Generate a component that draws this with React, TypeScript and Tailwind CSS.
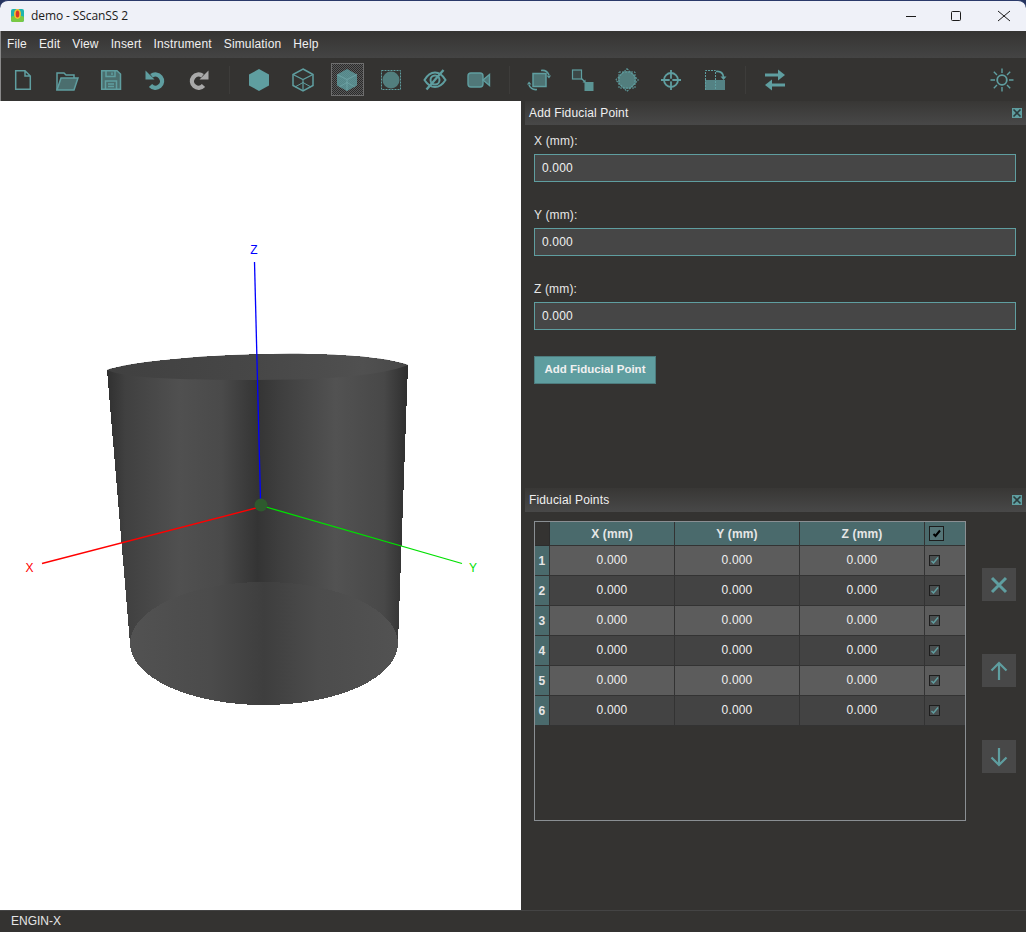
import React from "react";

const TEAL = "#5f9ea0";

const menus = ["File", "Edit", "View", "Insert", "Instrument", "Simulation", "Help"];
const rows = [1, 2, 3, 4, 5, 6];

const Svg: React.FC<{ children: React.ReactNode; size?: number }> = ({ children, size = 24 }) => (
  <svg width={size} height={size} viewBox="0 0 24 24" fill="none" stroke={TEAL} strokeWidth={1.5}>
    {children}
  </svg>
);

const hexPoints = "12,1 22,6.5 22,17.5 12,23 2,17.5 2,6.5";

const WireLines = () => (
  <>
    <path d="M2 6.5L12 11.5L22 6.5M12 11.5V23" strokeWidth={1.2} />
    <path d="M4 19L12 14.5L20 19" strokeWidth={1} />
  </>
);

const icons: React.ReactNode[][] = [
  [
    <path key="a" d="M4.7 2.7H14L19.3 8V21.3H4.7ZM14 2.7V8H19.3" />,
    <g key="b">
      <path d="M2 22V5H9L11 7H19V10" />
      <path d="M2 22L6 10H23L19 22Z" fill={TEAL} fillOpacity={0.55} />
    </g>,
    <g key="c">
      <path d="M2.7 2.7H18L21.5 6V21.3H2.7Z" fill={TEAL} fillOpacity={0.55} />
      <path d="M7 3V8.5H16V3M13 4.5V7M6.5 21V13H17.5V21M9 16H15M9 18.5H15" fill="none" />
    </g>,
    <g key="d">
      <path d="M8.5 7.800A6.600 6.600 0 1 1 7.500 17.500" strokeWidth={4.400} />
      <path d="M2.500 2.500V11.500H11.500Z" fill={TEAL} stroke="none" />
    </g>,
    <g key="e">
      <path d="M15.500 7.800A6.600 6.600 0 1 0 16.500 17.500" stroke="#a9a9a9" strokeWidth={4.400} />
      <path d="M21.500 2.500V11.500H12.500Z" fill="#a9a9a9" stroke="none" />
    </g>,
  ],
  [
    <polygon key="a" points={hexPoints} fill={TEAL} stroke="none" />,
    <g key="b">
      <polygon points={hexPoints} />
      <WireLines />
    </g>,
    <g key="c">
      <polygon points={hexPoints} fill={TEAL} fillOpacity={0.8} stroke="none" />
      <g stroke="#7fb5b7" strokeOpacity={0.45}>
        <WireLines />
      </g>
    </g>,
    <g key="d">
      <rect x="2.5" y="2.5" width="19" height="19" strokeWidth={1} strokeDasharray="2 1" />
      <circle cx="12" cy="12" r="8.5" fill={TEAL} fillOpacity={0.7} stroke="none" />
    </g>,
    <g key="e">
      <path d="M1.5 12C5 6 9 4.5 12 4.5S19 6 22.500 12C19 17.500 15 19 12 19S5 17.500 1.500 12Z" strokeWidth={2} />
      <circle cx="12" cy="12" r="4.500" strokeWidth={2} />
      <path d="M3.500 21.500L20.500 2" strokeWidth={2.400} />
    </g>,
    <g key="f">
      <rect x="1" y="5" width="15" height="14" rx="3" fill={TEAL} fillOpacity={0.65} strokeWidth={1.4} />
      <path d="M16 12L22.500 6.500V17.500Z" fill={TEAL} fillOpacity={0.65} strokeWidth={1.4} />
    </g>,
  ],
  [
    <g key="a">
      <rect x="6" y="5.500" width="13" height="13" fill={TEAL} fillOpacity={0.6} />
      <path d="M14 2.500C18 1.800 20.500 3.500 22 7" strokeWidth={1.6} />
      <path d="M19.500 7.500H24L22 10.500Z" fill={TEAL} stroke="none" />
      <path d="M10 21.500C6 22 3.500 20.500 2 17" strokeWidth={1.6} />
      <path d="M0 16.500H4.500L2 13.500Z" fill={TEAL} stroke="none" />
    </g>,
    <g key="b">
      <rect x="1.500" y="2" width="9" height="9" fill={TEAL} fillOpacity={0.2} strokeWidth={1.2} />
      <path d="M10.500 10.500L14 14" strokeWidth={1.2} />
      <path d="M14.500 14.500V11.500L11.500 14.500Z" fill={TEAL} stroke="none" />
      <rect x="13.500" y="14" width="9" height="9" fill={TEAL} fillOpacity={0.9} stroke="none" />
    </g>,
    <g key="c">
      <rect x="4" y="4" width="16" height="16" strokeWidth={1} strokeDasharray="2 1" />
      <rect x="4" y="4" width="16" height="16" strokeWidth={1} strokeDasharray="2 1" transform="rotate(45 12 12)" />
      <circle cx="12" cy="12" r="9" fill={TEAL} fillOpacity={0.7} stroke="none" />
    </g>,
    <g key="d">
      <circle cx="12" cy="12" r="7" strokeWidth={1.8} />
      <path d="M12 2V22M2 12H22" strokeWidth={1.800} />
      <circle cx="12" cy="12" r="1.500" fill="#343331" stroke="none" />
    </g>,
    <g key="e">
      <rect x="2" y="12" width="20" height="10" fill={TEAL} fillOpacity={0.75} stroke="none" />
      <path d="M2.500 12V2.500H12.500V22M2.500 22V12" strokeWidth={1} strokeDasharray="2 1" />
      <path d="M13 3.500C17 3 20 5 20.500 9" strokeWidth={1.6} />
      <path d="M17.500 8.500H23.500L20.500 12Z" fill={TEAL} stroke="none" />
    </g>,
  ],
  [
    <g key="a">
      <path d="M2 7H16" strokeWidth={3} />
      <path d="M15 1.500L22 7L15 12.500Z" fill={TEAL} stroke="none" />
      <path d="M22 17H8" strokeWidth={3} />
      <path d="M9 11.500L2 17L9 22.500Z" fill={TEAL} stroke="none" />
    </g>,
  ],
];

const ToolButton: React.FC<{ children: React.ReactNode; active?: boolean }> = ({ children, active }) => (
  <div className="flex h-[44px] w-[44px] items-center justify-center">
    {active ? (
      <div className="flex h-[33px] w-[33px] items-center justify-center border border-[#6e6e6e] bg-[repeating-conic-gradient(#5a5a5a_0_25%,#2a2a2a_0_50%)] bg-[length:2px_2px]">
        {children}
      </div>
    ) : (
      children
    )}
  </div>
);

const Toolbar = () => (
  <div className="flex h-[43px] items-center border-l border-[#8a8a8a] bg-[#343331] pr-[1px]">
    {icons.map((group, groupIndex) => (
      <React.Fragment key={groupIndex}>
        {group.map((icon, i) => (
          <ToolButton key={i} active={groupIndex === 1 && i === 2}>
            <Svg>{icon}</Svg>
          </ToolButton>
        ))}
        {groupIndex < icons.length - 1 && (
          <div className="mx-[7.5px] h-[28px] w-px bg-[#3d3c3a]" />
        )}
      </React.Fragment>
    ))}
    <div className="ml-auto flex h-[44px] w-[46px] items-center justify-center">
      <Svg>
        <circle cx="12" cy="12" r="4.800" strokeWidth={1.800} />
        <path d="M12 0.500V5M12 19V23.500M0.500 12H5M19 12H23.500M3.800 3.800L7 7M17 17L20.200 20.200M3.800 20.200L7 17M17 7L20.200 3.800" strokeWidth={1.400} />
      </Svg>
    </div>
  </div>
);

const DockHeader: React.FC<{ title: string }> = ({ title }) => (
  <div className="flex h-[24px] items-center justify-between bg-gradient-to-b from-[#383735] to-[#484848] pl-[4px] pr-[4px] text-[#f0f0f0]">
    <span>{title}</span>
    <svg width="10" height="10" viewBox="0 0 10 10">
      <rect width="10" height="10" fill={TEAL} />
      <path d="M1.500 1.500L8.500 8.500M8.500 1.500L1.500 8.500" stroke="#2c3c3d" strokeWidth={1.600} />
    </svg>
  </div>
);

const Field: React.FC<{ label: string }> = ({ label }) => (
  <div className="flex h-[74px] flex-col">
    <label className="flex h-[29px] items-center pt-[2px] text-[#e6e6e6]">{label}</label>
    <div className="flex h-[28px] items-center border border-[#5f9ea0] bg-[#464646] pl-[7px] text-[#f0f0f0]">0.000</div>
  </div>
);

const CheckMark: React.FC<{ color: string; width?: number }> = ({ color, width = 1.500 }) => (
  <svg width="9" height="9" viewBox="0 0 9 9" fill="none">
    <path d="M1.500 5L3.500 7L8 1.500" stroke={color} strokeWidth={width} />
  </svg>
);

const FiducialTable = () => (
  <div className="h-[300px] w-[432px] border border-[#8a8f93]">
    <div className="grid grid-cols-[15px_125px_125px_125px_40px]">
      <div className="h-[24px] border-r border-b border-[#2c2c2c] bg-[#343331]" />
      {["X (mm)", "Y (mm)", "Z (mm)"].map((h) => (
        <div key={h} className="flex h-[24px] items-center justify-center border-r border-b border-[#333] bg-[#4a6a6c] font-bold text-[#e6e6e6]">
          {h}
        </div>
      ))}
      <div className="flex h-[24px] items-center border-b border-[#333] bg-[#4a6a6c] pl-[4px]">
        <div className="flex h-[15px] w-[15px] items-center justify-center border border-[#1d1d1d] bg-[#557577]">
          <CheckMark color="#000" width={2} />
        </div>
      </div>
      {rows.map((row) => {
        const bg = row % 2 === 1 ? "bg-[#5c5c5c]" : "bg-[#434343]";
        return (
          <React.Fragment key={row}>
            <div className="flex h-[30px] items-center justify-center border-r border-b border-[#333] bg-[#4a6a6c] font-bold text-[#e6e6e6]">
              {row}
            </div>
            {[0, 1, 2].map((col) => (
              <div key={col} className={`flex h-[30px] items-center justify-center border-r border-b border-[#333] pb-[2px] text-[#f0f0f0] ${bg}`}>
                0.000
              </div>
            ))}
            <div className={`flex h-[30px] items-center border-b border-[#333] pl-[4px] ${bg}`}>
              <div className="flex h-[11px] w-[11px] items-center justify-center border border-[#1d1d1d] bg-[#4a4f50]">
                <CheckMark color={TEAL} />
              </div>
            </div>
          </React.Fragment>
        );
      })}
    </div>
  </div>
);

const SideButton: React.FC<{ d: string; strokeWidth?: number }> = ({ d, strokeWidth = 2.200 }) => (
  <div className="flex h-[33px] w-[34px] items-center justify-center bg-[#484848]">
    <svg width="20" height="20" viewBox="0 0 20 20" fill="none" stroke={TEAL} strokeWidth={strokeWidth}>
      <path d={d} />
    </svg>
  </div>
);

const Viewport = () => (
  <div className="w-[521px] bg-white">
    <svg width="521" height="809" viewBox="0 101 521 809" fontFamily="'Liberation Sans', sans-serif" fontSize="12">
      <defs>
        <linearGradient id="side" x1="107" x2="408" y1="0" y2="0" gradientUnits="userSpaceOnUse">
          <stop offset="0" stopColor="#303030" />
          <stop offset="0.06" stopColor="#404040" />
          <stop offset="0.24" stopColor="#505050" />
          <stop offset="0.38" stopColor="#4a4a4a" />
          <stop offset="0.5" stopColor="#343434" />
          <stop offset="0.58" stopColor="#3f3f3f" />
          <stop offset="0.76" stopColor="#525252" />
          <stop offset="0.92" stopColor="#484848" />
          <stop offset="1" stopColor="#2e2e2e" />
        </linearGradient>
        <linearGradient id="base" x1="130" x2="398" y1="0" y2="0" gradientUnits="userSpaceOnUse">
          <stop offset="0" stopColor="#525252" />
          <stop offset="0.3" stopColor="#4b4b4b" />
          <stop offset="0.5" stopColor="#3e3e3e" />
          <stop offset="0.7" stopColor="#4c4c4c" />
          <stop offset="1" stopColor="#525252" />
        </linearGradient>
        <linearGradient id="cap" x1="107" x2="408" y1="0" y2="0" gradientUnits="userSpaceOnUse">
          <stop offset="0" stopColor="#404040" />
          <stop offset="0.5" stopColor="#474747" />
          <stop offset="0.85" stopColor="#505050" />
          <stop offset="1" stopColor="#484848" />
        </linearGradient>
      </defs>
      <path d="M107 370C150 355 350 345 408 365L398 643.500A134 61.500 0 0 1 130 643.500Z" fill="url(#side)" shapeRendering="crispEdges" />
      <path d="M107 370C150 355 350 345 408 365C390 372 360 376 330 378C280 381 220 380 180 379C150 378 120 376 107 370Z" fill="url(#cap)" />
      <ellipse cx="264" cy="643.500" rx="134" ry="61.500" fill="url(#base)" shapeRendering="crispEdges" />
      <path d="M254.500 262L260.500 500" stroke="#0000ff" strokeWidth={1.300} />
      <path d="M42 563.500L256 508" stroke="#ff0000" strokeWidth={1.300} />
      <path d="M266 507L462 563.500" stroke="#00e000" strokeWidth={1.300} />
      <circle cx="261" cy="505" r="6.500" fill="#2e5a2e" />
      <text x="254" y="254" fill="#0000ff" textAnchor="middle">Z</text>
      <text x="29.500" y="572" fill="#ff0000" textAnchor="middle">X</text>
      <text x="473" y="572" fill="#00e000" textAnchor="middle">Y</text>
    </svg>
  </div>
);

export default function App() {
  return (
    <div className="flex h-[932px] w-[1026px] flex-col overflow-hidden bg-[#26345f] font-['Liberation_Sans',sans-serif] text-[12px] tracking-[0.15px]">
      {/* title bar */}
      <div className="flex h-[31px] items-center rounded-t-[8px] border-t border-[#2a3a6a] bg-[#eff1f8] pb-[1px] font-['Segoe_UI','Open_Sans',sans-serif] tracking-[-0.1px] text-[#1b1b1b]">
        <svg className="ml-[11px]" width="13" height="13" viewBox="0 0 13 13">
          <rect width="13" height="13" rx="2" fill="#1fb5b0" />
          <rect x="0" y="7" width="13" height="6" rx="2" fill="#7ac943" />
          <ellipse cx="6.500" cy="5" rx="3.500" ry="5" fill="#f2c230" />
          <ellipse cx="6.500" cy="5" rx="1.800" ry="3.500" fill="#d9342b" />
        </svg>
        <span className="ml-[7px]">demo - SScanSS 2</span>
        <div className="ml-auto flex items-center">
          <svg width="12" height="12" viewBox="0 0 12 12" stroke="#1b1b1b" fill="none" className="mr-[33px]"><path d="M1 6.500H11" /></svg>
          <svg width="12" height="12" viewBox="0 0 12 12" stroke="#1b1b1b" fill="none" className="mr-[35px]"><rect x="1.500" y="1.500" width="9" height="9" rx="1" /></svg>
          <svg width="14" height="14" viewBox="0 0 14 14" stroke="#1b1b1b" fill="none" className="mr-[15px]"><path d="M1 2L13 12M13 2L1 12" /></svg>
        </div>
      </div>

      {/* menu bar */}
      <div className="flex h-[27px] items-center border-l border-[#8a8a8a] bg-gradient-to-b from-[#353432] to-[#444444] pb-[2px] text-[#f0f0f0]">
        {menus.map((m) => (
          <span key={m} className="px-[6px]">{m}</span>
        ))}
      </div>

      <Toolbar />

      <div className="flex min-h-0 flex-1 bg-[#343331]">
        <Viewport />
        <div className="ml-[4px] flex flex-1 flex-col">
          <div className="flex h-[387px] flex-col">
            <DockHeader title="Add Fiducial Point" />
            <div className="flex flex-col pl-[9px] pr-[10px]">
              <Field label="X (mm):" />
              <Field label="Y (mm):" />
              <Field label="Z (mm):" />
              <button className="mt-[9px] flex h-[28px] w-[122px] items-center justify-center border border-[#4d7c7e] bg-[#5f9ea0] text-[11.5px] font-bold tracking-normal text-[#f0f0f0]">
                Add Fiducial Point
              </button>
            </div>
          </div>
          <DockHeader title="Fiducial Points" />
          <div className="flex pl-[9px] pt-[9px]">
            <FiducialTable />
            <div className="ml-[16px] flex flex-col gap-[53px] pt-[47px]">
              <SideButton d="M3 3L17 17M17 3L3 17" strokeWidth={3} />
              <SideButton d="M10 19V2M2.500 9.500L10 2L17.500 9.500" />
              <SideButton d="M10 1V18M2.500 10.500L10 18L17.500 10.500" />
            </div>
          </div>
        </div>
      </div>

      {/* status bar */}
      <div className="flex h-[22px] items-center border-t border-[#444] bg-[#343331] pb-[2px] pl-[11px] tracking-normal text-[#e6e6e6]">ENGIN-X</div>
    </div>
  );
}
